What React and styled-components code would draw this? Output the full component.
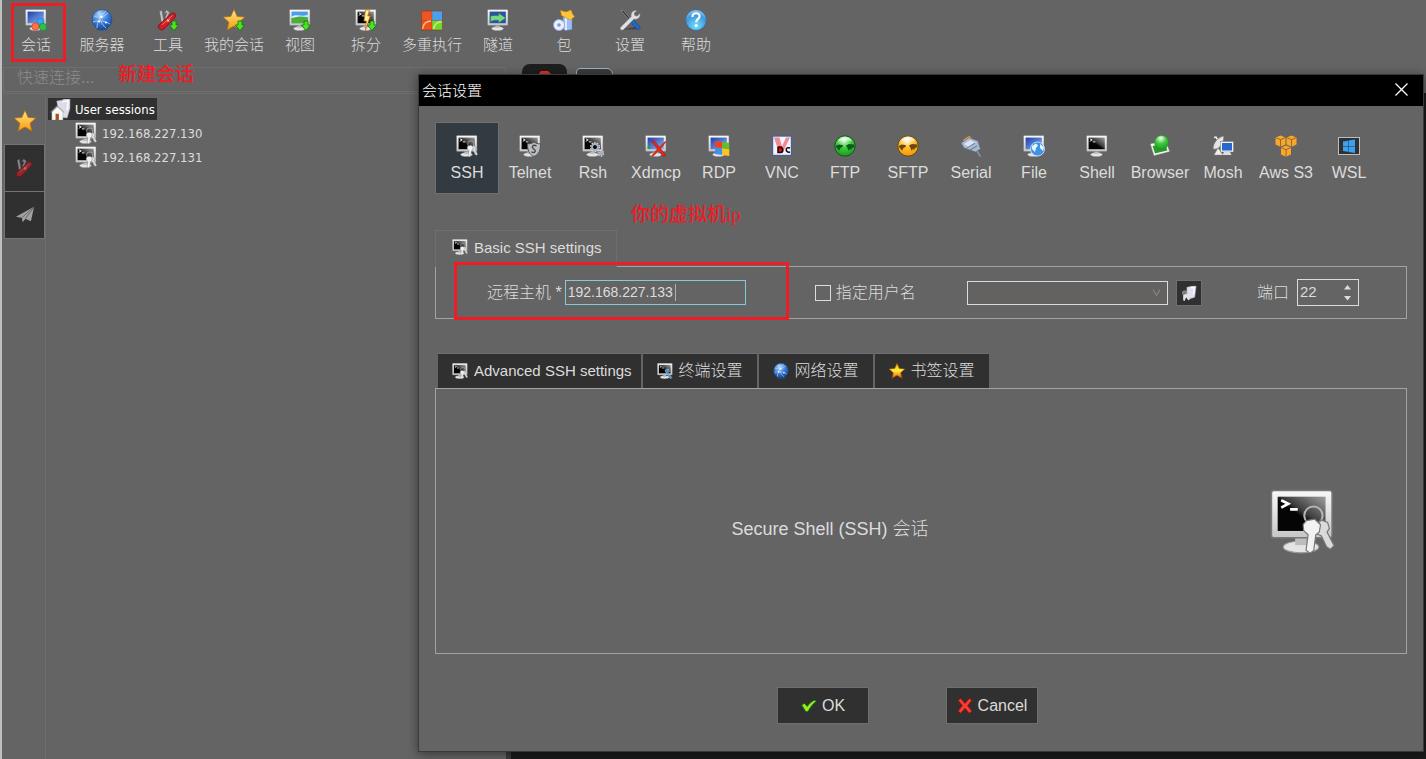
import React from "react";
import styled, { createGlobalStyle, css } from "styled-components";

const c = {
  bg: "#646464",
  dark: "#303030",
  text: "#dcdcdc",
  line: "#a2a2a2",
  faint: "#6e6e6e",
  red: "#ee1c25",
};
const sans = `"Liberation Sans", Arial, "Noto Sans CJK SC", sans-serif`;
const tahoma = `"DejaVu Sans Condensed", Tahoma, "Noto Sans CJK SC", sans-serif`;

const GlobalStyle = createGlobalStyle`
  *, *::before, *::after { box-sizing: border-box; }
  html, body { margin: 0; background: ${c.bg}; }
  body { font-family: ${sans}; color: ${c.text}; font-size: 15px; font-weight: 300; }
  button, input, select { font: inherit; color: inherit; margin: 0; padding: 0; border-radius: 0; }
  button { border: 0; background: none; }
  svg { display: block; flex: none; }
  h1, p, ul { margin: 0; padding: 0; font: inherit; }
  ul { list-style: none; }
`;

/* ---------- page shell ---------- */
const Page = styled.div`
  position: relative;
  min-height: 100vh;
  display: flex;
  flex-direction: column;
  border-left: 2px solid #c0c0c0;
  overflow: hidden;
`;
const Toolbar = styled.nav`
  position: relative;
  display: flex;
  height: 64px;
  padding: 4px 0 0 1px;
`;
const ToolButton = styled.button`
  width: 66px;
  display: flex;
  flex-direction: column;
  align-items: center;
  gap: 4px;
  padding-top: 5px;
  line-height: 20px;
  white-space: nowrap;
`;
const Main = styled.main`
  flex: 1;
  display: flex;
`;
const LeftPane = styled.section`
  width: 504px;
  flex: none;
  display: flex;
  flex-direction: column;
  padding-top: 3px;
`;
const QuickConnect = styled.input`
  height: 25px;
  margin: 0 0 1px 1px;
  padding: 0 0 4px 13px;
  border: 1px solid ${c.faint};
  background: transparent;
  font-size: 16px;
  &::placeholder { color: #8c8c8c; opacity: 1; }
`;
const Browser = styled.div`
  flex: 1;
  display: flex;
  margin-left: 1px;
  border-top: 1px solid ${c.faint};
`;
const SideTabs = styled.div`
  width: 43px;
  display: flex;
  flex-direction: column;
  gap: 1px;
  padding: 3px 1px 0 2px;
  border-right: 1px solid ${c.faint};
`;
const SideTab = styled.button`
  height: ${(p) => (p.$active ? 47 : 46)}px;
  display: grid;
  place-items: center;
  background: ${(p) => (p.$active ? "transparent" : c.dark)};
  outline: ${(p) => (p.$active ? "0" : `1px solid #747474`)};
`;
const Tree = styled.ul`
  padding: 3px 0 0 2px;
  font-family: ${tahoma};
  font-size: 13px;
`;
const TreeRow = styled.li`
  height: 24px;
  display: flex;
  align-items: center;
  gap: 5px;
  padding-left: ${(p) => (p.$root ? 0 : 27)}px;
`;
const RootLabel = styled.span`
  height: 22px;
  display: flex;
  align-items: center;
  gap: 4px;
  padding: 0 2px;
  background: ${c.dark};
  color: #fff;
`;
const Workspace = styled.section`
  flex: 1;
  display: flex;
  flex-direction: column;
`;
const WorkTabs = styled.div`
  height: 29px;
  display: flex;
  align-items: flex-start;
  gap: 9px;
  padding-left: 16px;
`;
const WorkTab = styled.div`
  width: ${(p) => (p.$home ? 45 : 37)}px;
  height: 26px;
  margin-top: ${(p) => (p.$home ? 0 : 4)}px;
  padding-top: 7px;
  display: flex;
  justify-content: center;
  border-radius: ${(p) => (p.$home ? 8 : 4)}px ${(p) => (p.$home ? 8 : 6)}px 0 0;
  background: ${(p) => (p.$home ? "#1e1e1e" : "#3c3c3c")};
  border: ${(p) => (p.$home ? "0" : "1px solid #9db4c8")};
`;
const Terminal = styled.div`
  flex: 1;
  background: #1b1b1b;
  border-left: 5px solid #3c3c3c;
`;

/* ---------- annotations lying over the window ---------- */
const MarkFrame = styled.div`
  position: absolute;
  border: 3px solid ${c.red};
  pointer-events: none;
  top: ${(p) => p.$top}px;
  left: ${(p) => p.$left}px;
  width: ${(p) => p.$width}px;
  height: ${(p) => p.$height}px;
`;
const MarkText = styled.p`
  position: absolute;
  top: ${(p) => p.$top}px;
  left: ${(p) => p.$left}px;
  color: ${c.red};
  font-family: "Liberation Serif", "Noto Sans CJK SC", serif;
  font-size: 19px;
  font-weight: 500;
  line-height: 24px;
  white-space: nowrap;
`;

/* ---------- dialog ---------- */
const Dialog = styled.section`
  position: absolute;
  top: 74px;
  left: 416px;
  right: 2px;
  background: ${c.bg};
  border: 1px solid #3a3a3a;
  box-shadow: 0 2px 10px rgba(0, 0, 0, 0.45);
`;
const TitleBar = styled.header`
  height: 31px;
  display: flex;
  align-items: center;
  justify-content: space-between;
  padding: 0 15px 2px 3px;
  background: #000;
  color: #fff;
`;
const DialogBody = styled.form`
  position: relative;
  padding: 17px 16px 28px;
`;
const Protocols = styled.div`
  display: flex;
  gap: 1px;
  padding-left: 1px;
`;
const Protocol = styled.button`
  width: 62px;
  height: 70px;
  display: flex;
  flex-direction: column;
  align-items: center;
  gap: 5px;
  padding-top: 12px;
  font-size: 16px;
  line-height: 22px;
  white-space: nowrap;
  ${(p) => p.$active && css`background: #323a42; outline: 1px solid #707070;`}
`;
const BasicTab = styled.div`
  width: 182px;
  height: 37px;
  margin: 37px 0 -1px;
  display: flex;
  align-items: center;
  gap: 6px;
  padding: 0 0 4px 16px;
  position: relative;
  background: ${c.bg};
  border: 1px solid ${c.faint};
  border-bottom: 0;
`;
const BasicFrame = styled.div`
  height: 53px;
  display: flex;
  align-items: center;
  border: 1px solid ${c.line};
  padding: 0 47px 0 51px;
  font-size: 15px;
`;
const Label = styled.label`
  font-size: 16px;
  line-height: 24px;
  white-space: nowrap;
`;
const HostBox = styled.span`
  position: relative;
  width: 181px;
  margin-left: 3px;
`;
const HostInput = styled.input`
  display: block;
  width: 100%;
  height: 25px;
  padding: 0 0 2px 2px;
  border: 1px solid #86c8dc;
  background: transparent;
  outline: 0;
  font-size: 14px;
`;
const Caret = styled.span`
  position: absolute;
  left: 110px;
  top: 4px;
  width: 1px;
  height: 17px;
  background: #b0b0b0;
`;
const UserCheck = styled.label`
  display: flex;
  align-items: center;
  gap: 5px;
  margin-left: 69px;
  font-size: 16px;
  line-height: 24px;
  white-space: nowrap;
`;
const Check = styled.input`
  appearance: none;
  width: 16px;
  height: 16px;
  border: 1px solid ${c.text};
`;
const SelectBox = styled.span`
  position: relative;
  width: 201px;
  margin-left: auto;
  svg { position: absolute; right: 7px; top: 8px; pointer-events: none; }
`;
const UserSelect = styled.select`
  appearance: none;
  display: block;
  width: 100%;
  height: 24px;
  background: #646260;
  border: 1px solid ${c.text};
`;
const UserButton = styled.button`
  width: 26px;
  height: 26px;
  margin: 0 55px 0 8px;
  display: grid;
  place-items: center;
  background: ${c.dark};
  border: 1px solid ${c.faint};
`;
const PortBox = styled.span`
  display: flex;
  width: 62px;
  height: 27px;
  margin-left: 8px;
  border: 1px solid ${c.text};
`;
const PortInput = styled.input`
  flex: 1;
  min-width: 0;
  padding: 0 0 2px 2px;
  border: 0;
  background: transparent;
  appearance: textfield;
  &::-webkit-inner-spin-button { appearance: none; margin: 0; }
`;
const Steppers = styled.span`
  width: 22px;
  display: flex;
  flex-direction: column;
  justify-content: center;
  align-items: center;
  gap: 6px;
`;
const Tabs = styled.div`
  display: flex;
  gap: 2px;
  margin-top: 35px;
  padding-left: 3px;
`;
const Tab = styled.button`
  min-width: 114px;
  height: 34px;
  display: flex;
  align-items: center;
  gap: 6px;
  padding: 0 ${(p) => (p.$latin ? 9 : 13)}px 0 14px;
  background: ${c.dark};
  box-shadow: 0 -1px 0 ${c.faint};
  font-size: ${(p) => (p.$latin ? 15 : 16)}px;
  line-height: 20px;
  white-space: nowrap;
`;
const Panel = styled.div`
  height: 266px;
  display: flex;
  align-items: center;
  gap: 46px;
  border: 1px solid ${c.line};
  padding: 0 71px 0 0;
  font-size: 18px;
`;
const PanelText = styled.p`
  flex: 1;
  padding-top: 11px;
  text-align: center;
`;
const Actions = styled.div`
  display: flex;
  justify-content: center;
  gap: 79px;
  margin-top: 34px;
  padding-right: 27px;
`;
const ActionButton = styled.button`
  width: 90px;
  height: 35px;
  display: flex;
  align-items: center;
  justify-content: center;
  gap: 5px;
  background: ${c.dark};
  outline: 1px solid ${c.faint};
  font-size: 16px;
`;

/* ---------- drawings, all on a 22 unit grid ---------- */
const Art = ({ size = 22, children }) => (
  <svg width={size} height={size} viewBox="0 0 22 22" aria-hidden="true">{children}</svg>
);
const HiddenDefs = styled.svg`
  position: absolute;
`;
const Defs = () => (
  <HiddenDefs width="0" height="0" aria-hidden="true">
    <defs>
      <linearGradient id="black" x1="0" y1="1" x2="1" y2="0"><stop offset=".45" stopColor="#050505" /><stop offset=".55" stopColor="#3c3c3c" /><stop offset="1" stopColor="#a0a0a0" /></linearGradient>
      <linearGradient id="blue" x1="0" y1="0" x2="1" y2="1"><stop offset="0" stopColor="#1a3fa8" /><stop offset="1" stopColor="#8fb6f4" /></linearGradient>
      <linearGradient id="gold" x1="0" y1="0" x2="0" y2="1"><stop offset="0" stopColor="#ffe680" /><stop offset="1" stopColor="#f79a10" /></linearGradient>
      <linearGradient id="hot" x1="0" y1="0" x2="0" y2="1"><stop offset="0" stopColor="#ffa000" /><stop offset=".5" stopColor="#fff03a" /><stop offset="1" stopColor="#f04a00" /></linearGradient>
      <linearGradient id="case" x1="0" y1="0" x2="0" y2="1"><stop offset="0" stopColor="#f8f8f8" /><stop offset="1" stopColor="#c6c6c6" /></linearGradient>
      <radialGradient id="globe" cx=".4" cy=".25" r=".8"><stop offset="0" stopColor="#b4dcff" /><stop offset=".5" stopColor="#3c7fd8" /><stop offset="1" stopColor="#123f94" /></radialGradient>
      <radialGradient id="help" cx=".5" cy=".8" r=".9"><stop offset="0" stopColor="#6fe0ff" /><stop offset=".6" stopColor="#3f96dc" /><stop offset="1" stopColor="#bfe2fb" /></radialGradient>
      <radialGradient id="green" cx=".45" cy=".2" r=".85"><stop offset="0" stopColor="#f0fff0" /><stop offset=".45" stopColor="#3fcb3c" /><stop offset="1" stopColor="#149420" /></radialGradient>
      <radialGradient id="orange" cx=".45" cy=".2" r=".85"><stop offset="0" stopColor="#fff" /><stop offset=".45" stopColor="#ffbf30" /><stop offset="1" stopColor="#f29000" /></radialGradient>
    </defs>
  </HiddenDefs>
);
const Monitor = ({ fill = "url(#black)", prompt }) => (
  <g>
    <ellipse cx="10.5" cy="19.6" rx="6" ry="2" fill="#e4e4e4" stroke="#999" strokeWidth=".4" />
    <path d="M8.5 16h4v3h-4z" fill="#bdbdbd" />
    <rect x=".5" y=".5" width="20.5" height="16" rx=".8" fill="url(#case)" stroke="#777" strokeWidth=".5" />
    <rect x="2.6" y="2.6" width="16.2" height="11.6" fill={fill} />
    {prompt && <path d="M3.8 3.8l2.4 1.2-2.4 1.3M6.8 6.9h2.6" fill="none" stroke="#fff" strokeWidth=".9" />}
  </g>
);
const Keys = () => (
  <g>
    <circle cx="14.7" cy="9" r="3.1" fill="none" stroke="#b4b4b4" strokeWidth=".7" />
    <path d="M15.8 12.5l1.5-2 2.2.8.6 2-.8 1.3 2.4 4.6-1.3 1.2-1.3-.9-1.7-3.6-2.4-1.2z" fill="#dadada" stroke="#777" strokeWidth=".4" />
    <path d="M12.3 10.7l2.8-.5 2 1.9-.4 2.4-1.2 1-.7 5.3-1.2.9-1.4-1 .7-5.2-1.5-1.4-.2-2z" fill="#f2f2f2" stroke="#777" strokeWidth=".4" />
  </g>
);
const Arrow = () => <path d="M15 12h4v4h2.700L17 21.600 12.300 16H15z" fill="#52e022" stroke="#0f7d0c" strokeWidth=".9" />;
const starPath = "M11 .5l3.200 6.900 7.600.7-5.700 5.200 1.800 7.700L11 17.100l-6.900 3.900 1.800-7.700L.200 8.100l7.600-.7z";
const Knife = () => (
  <g>
    <path d="M2.5 2.5l2.3-1.2 2.2 12.5-2.6-.8zM9.5 1l3 2.4-3.3 7-1.4-.6 2.4-6-2.6.6z" fill="#c4c8cc" stroke="#666" strokeWidth=".5" />
    <path d="M1.8 16L14.5 4.500c3-1.500 5.500 1.200 3.300 4.200L7 20c-3 2.200-6.900-.8-5.200-4z" fill="#d41c24" stroke="#74060b" strokeWidth=".7" />
    <path d="M5 15.800L15.500 6.500" stroke="#f47a78" strokeWidth=".9" /><path d="M10 10.500l2.400 2.200m.1-2.400l-2.300 2.400" stroke="#fff" strokeWidth=".8" />
  </g>
);
const Globe = () => (
  <g>
    <ellipse cx="11" cy="20.500" rx="6" ry="1.200" fill="#274f8b" opacity=".7" />
    <circle cx="11" cy="10.500" r="10" fill="url(#globe)" stroke="#1c4a94" strokeWidth=".6" />
    <path d="M3 7c5 2 8 2 14-3M2 13c6-2 12-1 17 2M8 2c0 7 2 13 7 17M15 2C9 7 6 13 6 19" fill="none" stroke="#b9d7f8" strokeWidth=".8" />
    <circle cx="10.400" cy="8" r="1.200" fill="#fff" /><circle cx="8" cy="12.500" r="1.100" fill="#fff" /><circle cx="15" cy="13.500" r="1" fill="#fff" />
  </g>
);
const World = ({ fill, dark, edge }) => (
  <g>
    <circle cx="11" cy="11" r="10.200" fill={fill} stroke={edge} strokeWidth="1" />
    <path d="M1.500 11l3.500-1.500 4 .8-.5 1.700-2.200 1-.8 2.500-1.500-1zM12 10.500l3-1.500 5 .5.5 2.500-2.500 1-1 2-1.200-1.200-1 2.200-1.300-3z" fill={dark} />
    <path d="M4 6.500c2-5 12-6 14 0-4-1.600-10-1.600-14 0z" fill="#fff" opacity=".6" />
  </g>
);
const Gear = ({ x, y, r }) => (
  <g fill="none">
    <circle cx={x} cy={y} r={r + 0.8} stroke="#d4d8e4" strokeWidth="1.5" strokeDasharray="1.5 1.2" />
    <circle cx={x} cy={y} r={r - 0.5} stroke="#a9b0c4" strokeWidth="2" />
  </g>
);
const flag = [["M0 0h10.500v9.500H0z", "#ee5426"], ["M10.500 0H21v9.500H10.500z", "#4aa0ee"], ["M0 9.500h10.500V19H0z", "#f0501c"], ["M10.500 9.500H21V19H10.500z", "#72d62e"]];

const art = {
  session: <><Monitor fill="url(#blue)" /><circle cx="15.500" cy="12.500" r="3.600" fill="#36a5ef" stroke="#1668b4" strokeWidth=".5" /><circle cx="10.500" cy="17.500" r="3.700" fill="#ff7044" stroke="#bd3210" strokeWidth=".5" /><circle cx="18" cy="18" r="3.700" fill="#2ebe4e" stroke="#0b7c26" strokeWidth=".5" /></>,
  servers: <Globe />,
  tools: <><Knife /><Arrow /></>,
  mysess: <><path d={starPath} fill="url(#gold)" stroke="#ae6c12" strokeWidth=".6" /><Arrow /></>,
  view: <><Monitor fill="#4a9de8" /><path d="M2.600 9c5-2.400 10-2 16.200 0v5.200H2.600z" fill="#4cae32" /><path d="M2.600 7.500c5-3 9 .5 16.200-1.500v2c-6-1-11-.5-16.200 1z" fill="#e6f1fb" /><Arrow /></>,
  split: <><Monitor prompt /><path d="M10.500 1h4l-1.800 6h2.500L10.400 21.500l1-9.500H9z" fill="#fff3a4" stroke="#dd6b10" strokeWidth=".8" /><Arrow /></>,
  multi: <g transform="translate(.5 2)">{flag.map(([d, f]) => <path key={d} d={d} fill={f} />)}<path d="M0 9.500h21M10.500 0v19" stroke="#7b4a22" strokeWidth=".5" opacity=".6" /><path d="M1 18c1-6 4-8 8.500-8M12 18c1-5 4-7 8-7.500" stroke="#fff0a0" opacity=".7" fill="none" strokeWidth="1.500" /><path d="M0 0h21v19H0z" fill="none" stroke="#8a3a16" strokeWidth=".6" /></g>,
  tunnel: <><Monitor fill="#2f4fac" /><path d="M3.500 7.200c3-1 5-.8 8-.4V4l7.400 5-7.400 5v-2.700c-3-.3-5 0-8 1.200z" fill="#79d884" stroke="#1f7f36" strokeWidth=".6" /></>,
  pack: <><path d="M10 8h9v12.500l-7 1-2-2z" fill="#9dbcf4" stroke="#6387cf" strokeWidth=".5" /><path d="M13 8v13" stroke="#dce8ff" strokeWidth="2" /><path d="M7.500 1.500L13 3l5-2 1.500 4 2 2.500-4 3.500-9-4.500z" fill="#ffc438" stroke="#d38914" strokeWidth=".6" /><circle cx="6" cy="16" r="5.500" fill="#e9eefc" stroke="#8fa5d8" strokeWidth=".8" /><circle cx="6" cy="16" r="1.800" fill="#7d96d0" /></>,
  settings: <><path d="M3 20.500h17l-3-3z" fill="#333" opacity=".6" /><path d="M2 1.500l2-.5 8.500 10-1.300 1.200z" fill="#2f2f2f" stroke="#999" strokeWidth=".7" /><path d="M11 12.500l2.800-2.400 7 7.500c1 2-1 3.600-2.800 2.600z" fill="#1d68c8" stroke="#0c3d85" strokeWidth=".5" /><path d="M1.600 18.200L12.300 7.500C11.500 3.800 14 .8 18 1.500L15 4.200l.7 2.200 2.400.8L21 4.500c.7 3.800-2.400 6.500-6 5.500L4.400 20.800c-2 1-4-.8-2.800-2.600z" fill="#e0e0e0" stroke="#808080" strokeWidth=".5" /></>,
  help: <><circle cx="11" cy="11" r="10.300" fill="url(#help)" stroke="#2a6ba8" strokeWidth=".6" /><path d="M7.400 8c.1-5 7.500-4.800 7.200-.5-.2 2.400-3.400 2.600-3.400 5.700" fill="none" stroke="#fff" strokeWidth="2.200" /><circle cx="11.200" cy="16.600" r="1.500" fill="#fff" /></>,
  ssh: <><Monitor prompt /><Keys /></>,
  telnet: <><Monitor prompt /><path d="M15 7c2 1.500 4 1.800 6.500 1.800C21.500 15 20 19.500 15 21.500 10 19.500 8.500 15 8.500 8.800 11 8.800 13 8.500 15 7z" fill="#b9bdc0" stroke="#555" strokeWidth="1" /><path d="M17.500 11c-3-2-6 .8-3 2.800s2 5-2 3" fill="none" stroke="#444" strokeWidth="1.300" /></>,
  rsh: <><Monitor prompt /><Gear x={13} y={12} r={3.500} /><Gear x={19} y={18.500} r={1.800} /></>,
  xdmcp: <><Monitor fill="url(#blue)" /><circle cx="4" cy="12" r="1.500" fill="#19a33a" /><path d="M6.500 6l2.500-.5 5.500 6.700L20 6.500l1 .5-5.400 6.600L21 20.500l-2.700.8-4.800-5.800-5.700 6.200-1-1 5.500-6.800z" fill="#ee2414" stroke="#850a04" strokeWidth=".4" /></>,
  rdp: <><Monitor fill="url(#blue)" /><g transform="translate(7 6) skewY(8) scale(.68)">{flag.map(([d], i) => <path key={d} d={d} fill={["#ee4322", "#69bb2b", "#3c93e8", "#ffc51f"][i]} />)}</g></>,
  vnc: <><rect x="1.500" y="1" width="19" height="19.500" fill="#f3f3f8" stroke="#49619b" strokeWidth="1.400" /><path d="M3 2.500h5.500l2.500 9 4-9h4l-7.500 15.500H8.200z" fill="#f28a94" /><path d="M7 11h4v7H7z" fill="#e40f16" /><path d="M7 12.500h2.500c3 0 3 5 0 5H7zM19 13c-5-2-5 5.500 0 4" fill="none" stroke="#16060a" strokeWidth="1.500" /></>,
  ftp: <World fill="url(#green)" dark="#0b5a1e" edge="#0d5a12" />,
  sftp: <World fill="url(#orange)" dark="#6e4706" edge="#6b4a0c" />,
  serial: <><path d="M3 5l6-4 3 2-7 5z" fill="#f5a52b" /><path d="M1 8l8-5.500 9 3.500 2.500 8-5 3L4 13z" fill="#aab9cf" stroke="#5a6a85" strokeWidth=".7" /><path d="M4 9l6-4 6 2.500-7 5z" fill="#dbe4f0" /><path d="M7 13l8-5m-5 7l7-4" stroke="#63748f" strokeWidth="1" /><path d="M17 16l3.500 5.500" stroke="#8494b0" strokeWidth="1.500" /></>,
  file: <><Monitor fill="url(#blue)" /><circle cx="14.500" cy="14" r="7" fill="#3e94e4" stroke="#d9ecff" strokeWidth=".8" /><path d="M9 11l4-2.500 2 2-2 2.500-1 4-3-3zM17 9l4 3-1 4-3-3z" fill="#e9f5ff" /></>,
  shell: <Monitor prompt />,
  browser: <><path d="M1.500 9l15-3.500 4 11L5 20.500z" fill="#fff" stroke="#a6a6a6" strokeWidth=".5" /><path d="M3.500 11l12-2.500 3 7L6 18.500z" fill="#2b9b28" /><circle cx="12.500" cy="7.500" r="7" fill="url(#green)" stroke="#1c8c1c" strokeWidth=".5" /></>,
  mosh: <><path d="M2 2.500l2-.5 3 5" stroke="#eee" fill="none" strokeWidth="1.500" /><path d="M12 1C6 2 1 8 1 14c5 1 10-3 11-13z" fill="#e5e5e5" stroke="#777" strokeWidth=".7" /><path d="M2 20l4-7 5 7z" fill="#f0f0f0" stroke="#888" strokeWidth=".5" /><rect x="8.500" y="6.500" width="13" height="10.500" fill="#f2f2f2" stroke="#777" strokeWidth=".5" /><rect x="10" y="8" width="10" height="7.500" fill="#2566cf" /><path d="M12 17h6l1.500 3h-9z" fill="#ddd" /></>,
  aws: <>{[[5.5, 6], [16.5, 6], [11, 16]].map(([x, y]) => <g key={x} transform={`translate(${x} ${y})`}><path d="M0-5.500l5 2v7L0 5.700l-5-2.200v-7z" fill="#f9a72b" /><path d="M-5-3.500L0-1.300l5-2.200M0-1.300v7" fill="none" stroke="#7a5a28" strokeWidth=".8" /></g>)}</>,
  wsl: <><rect x=".5" y="2.500" width="21" height="17" fill="#303030" stroke="#bebebe" /><path d="M5 6.500l5-.8v5.500H5zM10.500 5.500l6.500-1v6.700h-6.500zM5 11.700h5v5l-5-.8zM10.500 11.700H17v6.200l-6.500-1z" fill="#3aa0f0" /></>,
  terminal: <><Monitor prompt /><path d="M11 10l4.500-2 1.500 4-2.500 1.500 6 6.500-2 1.500-5.500-7z" fill="#3b8fd0" stroke="#d6e6f5" strokeWidth=".6" /></>,
  star: <path d={starPath} fill="url(#hot)" stroke="#a24a00" strokeWidth=".7" />,
  bigStar: <path d={starPath} fill="url(#gold)" stroke="#b86a00" strokeWidth=".7" />,
  knife: <g opacity=".6"><Knife /></g>,
  plane: <><path d="M1 13L21 2l-3.500 16-6-3-3 4-1-5z" fill="#a2a2a2" /><path d="M7.500 14L21 2l-9.500 13" fill="none" stroke="#555" strokeWidth=".8" /></>,
  home: <><path d="M7 2l6-1 1.500-1H21v10l-3 10-8-1z" fill="#dcdce8" stroke="#8f8f9c" strokeWidth=".5" /><path d="M13 3l6-1-1 10" fill="none" stroke="#fff" strokeWidth="1.500" /><path d="M2 13.500L7.500 8l6 5.500V22H2z" fill="#f8f8f8" stroke="#aaa" strokeWidth=".5" /><path d="M.500 14L7.500 7l7.200 7" fill="none" stroke="#999" strokeWidth="1" /><path d="M5.800 15.500h3.500V22H5.800z" fill="#a8511d" /></>,
  user: <><path d="M8 3l7-1.500h6L19 17l-8 2.500L8 14z" fill="#dfe0ee" stroke="#8c8d9c" strokeWidth=".5" /><path d="M13 4l5-.5-1 10" fill="none" stroke="#fff" strokeWidth="1.500" /><circle cx="5" cy="11" r="3" fill="#777" stroke="#aaa" /><path d="M3 14l4-2 3 2 2 6-2 1-3-4-2 5-2-1z" fill="#e4e4e4" /></>,
  ok: <path d="M1 9.500l4-2 3.500 4.300c3-4 6-7 10-8.800l2.500 1.500C16 8 13 12.500 9.500 18.500h-3z" fill="#92ee1c" stroke="#176a16" strokeWidth=".9" />,
  cancel: <path d="M1.500 3l3.500-2.300 6 6.800 6-6.800L20.500 3l-6 7.500 6 7.500-3.500 3-6-7-6 7-3.500-3 6-7.500z" fill="#fb3b34" stroke="#9c0907" strokeWidth=".9" />,
};
const Icon = ({ name, size }) => <Art size={size}>{art[name]}</Art>;

const tools = [["session", "会话"], ["servers", "服务器"], ["tools", "工具"], ["mysess", "我的会话"], ["view", "视图"], ["split", "拆分"], ["multi", "多重执行"], ["tunnel", "隧道"], ["pack", "包"], ["settings", "设置"], ["help", "帮助"]];
const protocols = [["ssh", "SSH"], ["telnet", "Telnet"], ["rsh", "Rsh"], ["xdmcp", "Xdmcp"], ["rdp", "RDP"], ["vnc", "VNC"], ["ftp", "FTP"], ["sftp", "SFTP"], ["serial", "Serial"], ["file", "File"], ["shell", "Shell"], ["browser", "Browser"], ["mosh", "Mosh"], ["aws", "Aws S3"], ["wsl", "WSL"]];
const tabs = [["ssh", "Advanced SSH settings"], ["terminal", "终端设置"], ["servers", "网络设置"], ["star", "书签设置"]];

const SessionDialog = () => (
  <Dialog role="dialog" aria-labelledby="dialog-title">
    <TitleBar>
      <h1 id="dialog-title">会话设置</h1>
      <button type="button" aria-label="Close">
        <svg width="13" height="13" viewBox="0 0 13 13"><path d="M.5.5l12 12m0-12l-12 12" stroke="#fff" strokeWidth="1.300" /></svg>
      </button>
    </TitleBar>
    <DialogBody onSubmit={(e) => e.preventDefault()}>
      <Protocols>
        {protocols.map(([icon, name], i) => (
          <Protocol type="button" key={name} $active={i === 0}><Icon name={icon} />{name}</Protocol>
        ))}
      </Protocols>
      <BasicTab><Icon name="ssh" size={16} />Basic SSH settings</BasicTab>
      <BasicFrame>
        <Label htmlFor="host">远程主机 *</Label>
        <HostBox><HostInput id="host" defaultValue="192.168.227.133" /><Caret /></HostBox>
        <UserCheck><Check type="checkbox" />指定用户名</UserCheck>
        <SelectBox>
          <UserSelect aria-label="用户名" />
          <svg width="9" height="8" viewBox="0 0 9 8"><path d="M1 .5l3.500 6L8 .5" fill="none" stroke="#8e8e8e" /></svg>
        </SelectBox>
        <UserButton type="button" aria-label="用户"><Icon name="user" size={16} /></UserButton>
        <Label htmlFor="port">端口</Label>
        <PortBox>
          <PortInput id="port" type="number" defaultValue="22" />
          <Steppers>
            <button type="button" aria-label="+"><svg width="7" height="5"><path d="M3.500 0L7 4.500H0z" fill={c.text} /></svg></button>
            <button type="button" aria-label="-"><svg width="7" height="5"><path d="M3.500 4.500L7 0H0z" fill={c.text} /></svg></button>
          </Steppers>
        </PortBox>
      </BasicFrame>
      <Tabs>
        {tabs.map(([icon, name], i) => (
          <Tab type="button" key={name} $latin={i === 0}><Icon name={icon} size={16} />{name}</Tab>
        ))}
      </Tabs>
      <Panel>
        <PanelText>Secure Shell (SSH) 会话</PanelText>
        <Icon name="ssh" size={65} />
      </Panel>
      <Actions>
        <ActionButton type="submit"><Icon name="ok" size={16} />OK</ActionButton>
        <ActionButton type="button"><Icon name="cancel" size={16} />Cancel</ActionButton>
      </Actions>
      <MarkText $top={97} $left={212}>你的虚拟机ip</MarkText>
      <MarkFrame $top={156} $left={35} $width={335} $height={58} />
    </DialogBody>
  </Dialog>
);

export default function App() {
  return (
    <Page>
      <GlobalStyle />
      <Defs />
      <Toolbar>
        {tools.map(([icon, name]) => <ToolButton key={name}><Icon name={icon} />{name}</ToolButton>)}
        <MarkFrame $top={3} $left={9} $width={55} $height={59} />
        <MarkText $top={63} $left={116}>新建会话</MarkText>
      </Toolbar>
      <Main>
        <LeftPane>
          <QuickConnect aria-label="快速连接" placeholder="快速连接..." />
          <Browser>
            <SideTabs>
              <SideTab $active aria-label="Sessions"><Icon name="bigStar" size={22} /></SideTab>
              <SideTab aria-label="Tools"><Icon name="knife" size={20} /></SideTab>
              <SideTab aria-label="Macros"><Icon name="plane" size={20} /></SideTab>
            </SideTabs>
            <Tree>
              <TreeRow $root><RootLabel><Icon name="home" size={21} />User sessions</RootLabel></TreeRow>
              <TreeRow><Icon name="ssh" />192.168.227.130</TreeRow>
              <TreeRow><Icon name="ssh" />192.168.227.131</TreeRow>
            </Tree>
          </Browser>
        </LeftPane>
        <Workspace>
          <WorkTabs>
            <WorkTab $home><svg width="14" height="8"><path d="M3 0h7l4 4v4H0V4z" fill="#d8352a" /></svg></WorkTab>
            <WorkTab />
          </WorkTabs>
          <Terminal />
        </Workspace>
      </Main>
      <SessionDialog />
    </Page>
  );
}
